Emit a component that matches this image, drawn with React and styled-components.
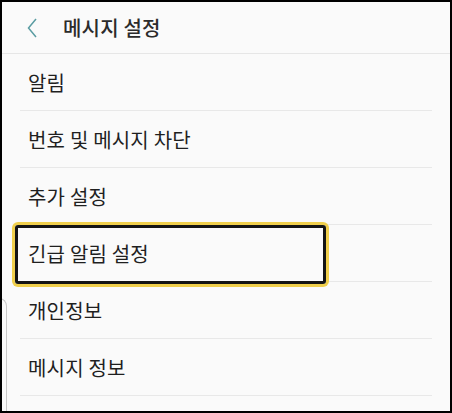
import styled, { createGlobalStyle } from 'styled-components';

const GlobalStyle = createGlobalStyle`
  body {
    margin: 0;
    background: #fafafa;
    font-family: 'Noto Sans CJK KR', 'Noto Sans', sans-serif;
  }
`;

const items = ['알림', '번호 및 메시지 차단', '추가 설정', '긴급 알림 설정', '개인정보', '메시지 정보'];

const App = () => {
  return (
    <>
      <GlobalStyle />
      <Frame>
        <Header>
          <BackBtn aria-label="back">
            <svg width="12" height="20" viewBox="0 0 12 20">
              <path d="M10 1 L2.5 10 L10 19" fill="none" stroke="#5a9ca2" strokeWidth="1.5" />
            </svg>
          </BackBtn>
          <Title>메시지 설정</Title>
        </Header>
        <List>
          {items.map(item => (
            <Row key={item}>{item}</Row>
          ))}
        </List>
        <Highlight />
        <SheetEdge />
      </Frame>
    </>
  );
};

export default App;

const Frame = styled.div`
  position: relative;
  box-sizing: border-box;
  width: 452px;
  height: 413px;
  border: 2px solid #000;
  background: #fafafa;
  overflow: hidden;
`;

const Header = styled.div`
  display: flex;
  align-items: center;
  height: 51px;
  border-bottom: 1px solid #e6e6e6;
`;

const BackBtn = styled.div`
  display: flex;
  align-items: center;
  margin-left: 24px;
  width: 12px;
  height: 20px;
  svg {
    display: block;
  }
`;

const Title = styled.h1`
  margin: 0 0 0 25px;
  font-size: 20px;
  font-weight: 500;
  color: #2b2b2b;
  letter-spacing: 0.2px;
`;

const List = styled.div`
  display: flex;
  flex-direction: column;
`;

const Row = styled.div`
  position: relative;
  display: flex;
  align-items: center;
  height: 57px;
  padding-left: 26px;
  font-size: 20px;
  color: #1f1f1f;
  letter-spacing: 0.2px;
  &::after {
    content: '';
    position: absolute;
    left: 18px;
    right: 18px;
    bottom: 0;
    height: 1px;
    background: #e8e8e8;
  }
`;

const Highlight = styled.div`
  position: absolute;
  left: 13px;
  top: 223px;
  width: 311px;
  height: 59px;
  border: 3px solid #141414;
  border-radius: 3px;
  box-shadow: 0 0 0 3px #f0cf4c;
  box-sizing: border-box;
`;

const SheetEdge = styled.div`
  position: absolute;
  left: -6px;
  top: 296px;
  width: 10px;
  height: 140px;
  border-right: 1px solid #c8c8c8;
  border-top: 1px solid #c8c8c8;
  border-top-right-radius: 8px;
`;
